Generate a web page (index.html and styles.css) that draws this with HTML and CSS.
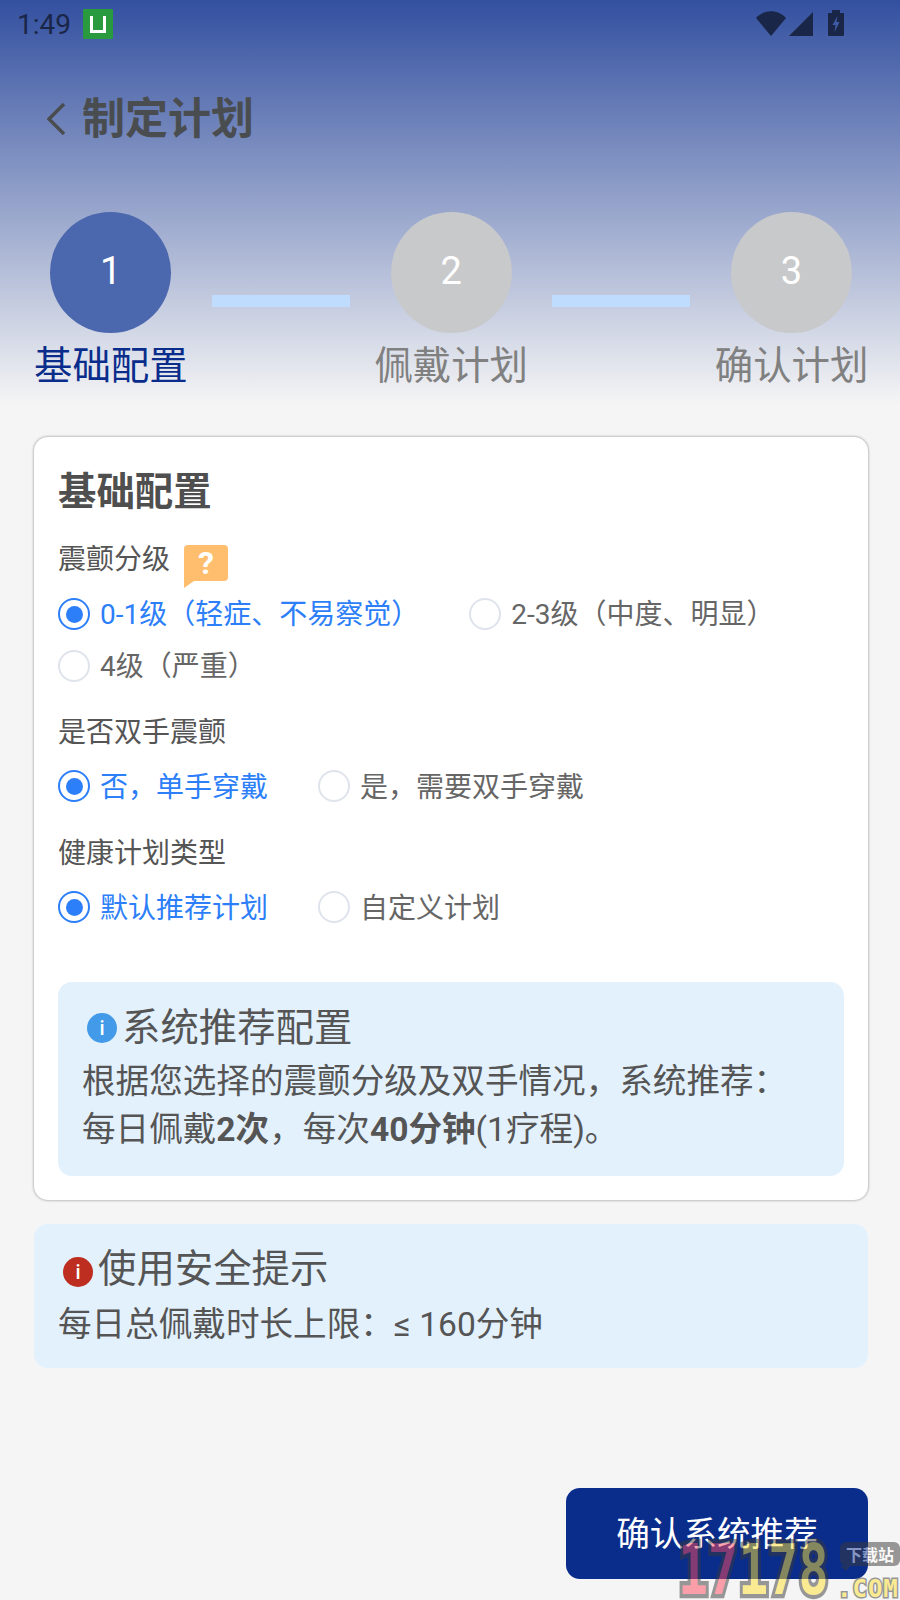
FILE: index.html
```html
<!DOCTYPE HTML>
<html>
<head>
  <meta charset="utf-8">
  <title>制定计划</title>
  <link rel="stylesheet" href="styles.css">
</head>
<body>
<div class="header">
  <div class="status-bar">
    <span class="time">1:49</span>
    <svg class="app-icon" width="30" height="30" viewBox="0 0 30 30">
      <rect width="30" height="30" rx="1" fill="#2a9a3e"/>
      <path d="M8.5 7V22.5H21.5V7" fill="none" stroke="#fff" stroke-width="3"/>
    </svg>
    <div class="status-icons">
      <svg width="30" height="26" viewBox="0 0 30 26"><path d="M0 7C8 -2 22 -2 30 7L15 25Z" fill="#1a2648"/></svg>
      <svg class="signal" width="24" height="24" viewBox="0 0 24 24"><path d="M0 24L24 0V24Z" fill="#1a2648"/></svg>
      <svg class="battery" width="16" height="26" viewBox="0 0 16 26">
        <path fill-rule="evenodd" fill="#1a2648" d="M4 0H12V3H15Q16 3 16 4V25Q16 26 15 26H1Q0 26 0 25V4Q0 3 1 3H4ZM9.5 6L4.5 15H7.5L6.5 22L11.5 12H8.5Z"/>
      </svg>
    </div>
  </div>
  <div class="title-row">
    <svg class="back" width="18" height="32" viewBox="0 0 18 32"><path d="M17 1L2 16L17 31" fill="none" stroke="#4a4d4f" stroke-width="3.5"/></svg>
    <h1>制定计划</h1>
  </div>
  <div class="stepper">
    <div class="step active"><div class="step-num">1</div><div class="step-name">基础配置</div></div>
    <div class="step-bar"></div>
    <div class="step"><div class="step-num">2</div><div class="step-name">佩戴计划</div></div>
    <div class="step-bar"></div>
    <div class="step"><div class="step-num">3</div><div class="step-name">确认计划</div></div>
  </div>
</div>

<div class="content">
  <div class="card">
    <h2>基础配置</h2>
    <div class="label-row">
      <span class="label">震颤分级</span>
      <span class="help">?</span>
    </div>
    <div class="options wrap">
      <div class="option on"><span class="radio"></span>0-1级（轻症、不易察觉）</div>
      <div class="option"><span class="radio"></span>2-3级（中度、明显）</div>
      <div class="option"><span class="radio"></span>4级（严重）</div>
    </div>
    <div class="label section">是否双手震颤</div>
    <div class="options">
      <div class="option on"><span class="radio"></span>否，单手穿戴</div>
      <div class="option"><span class="radio"></span>是，需要双手穿戴</div>
    </div>
    <div class="label section lower">健康计划类型</div>
    <div class="options">
      <div class="option on"><span class="radio"></span>默认推荐计划</div>
      <div class="option"><span class="radio"></span>自定义计划</div>
    </div>
    <div class="notice recommend">
      <div class="notice-title"><span class="dot blue">i</span>系统推荐配置</div>
      <div class="notice-body">根据您选择的震颤分级及双手情况，系统推荐：<br>每日佩戴<b>2次</b>，每次<b>40分钟</b>(1疗程)。</div>
    </div>
  </div>

  <div class="notice safety">
    <div class="notice-title"><span class="dot red">i</span>使用安全提示</div>
    <div class="notice-body">每日总佩戴时长上限：≤ 160分钟</div>
  </div>

  <div class="footer">
    <button class="confirm">确认系统推荐</button>
  </div>
</div>

<div class="watermark">
  <span class="wm-num"><span class="wm-pink">17</span>178</span>
  <span class="wm-tag">下载站</span>
  <span class="wm-com">.COM</span>
</div>
</body>
</html>
```

FILE: styles.css
```css
* {
  box-sizing: border-box;
}

body {
  margin: 0;
  min-height: 1600px;
  position: relative;
  overflow: hidden;
  background: #f5f5f5;
  color: #555;
  font-family: Roboto, "Noto Sans CJK SC", sans-serif;
}

.header {
  height: 405px;
  background: linear-gradient(180deg, #3350a0 0, #f5f5f5 100%);
}

.status-bar {
  height: 48px;
  padding: 9px 0 0 17px;
  display: flex;
  align-items: flex-start;
}

.time {
  font-size: 28px;
  line-height: 32px;
  color: #1a2648;
}

.app-icon {
  margin-left: 12px;
}

.status-icons {
  margin-left: 643px;
  margin-top: 2px;
  display: flex;
  align-items: flex-start;
}

.signal {
  margin-left: 3px;
  margin-top: 1px;
}

.battery {
  margin-left: 15px;
  margin-top: -1px;
}

.title-row {
  margin-top: 37px;
  height: 60px;
  padding-left: 47px;
  display: flex;
  align-items: center;
  gap: 17px;
}

.back {
  margin-top: 8px;
}

h1 {
  margin: 0;
  font-size: 43px;
  font-weight: 700;
  color: #4a4d4f;
}

.stepper {
  margin-top: 67px;
  padding: 0 0 0 34px;
  display: flex;
  align-items: flex-start;
}

.step {
  width: 153.6px;
  flex-shrink: 0;
  display: flex;
  flex-direction: column;
  align-items: center;
}

.step-num {
  width: 121px;
  height: 121px;
  padding-bottom: 3px;
  border-radius: 50%;
  background: #c8c9cb;
  color: #fff;
  font-size: 38px;
  display: flex;
  align-items: center;
  justify-content: center;
}

.step-name {
  margin-top: 9px;
  font-size: 38.4px;
  line-height: 48px;
  color: #808080;
  white-space: nowrap;
}

.active .step-num {
  background: #4b67ad;
}

.active .step-name {
  color: #0a2d8c;
}

.step-bar {
  width: 138px;
  height: 12px;
  flex-shrink: 0;
  margin: 83px 24.4px 0;
  background: #bfdcff;
}

.content {
  padding: 32px 32px 0 34px;
}

.card {
  height: 763px;
  padding: 27px 24px 24px;
  border-radius: 14px;
  background: #fff;
  box-shadow: 0 0 3px rgba(0, 0, 0, .45);
}

h2 {
  margin: 0;
  font-size: 38.4px;
  line-height: 56px;
  font-weight: 700;
  color: #4f4f4f;
}

.label-row {
  margin-top: 20px;
  height: 58px;
  display: flex;
  align-items: flex-start;
}

.label {
  font-size: 28px;
  line-height: 40px;
  color: #555;
}

.section {
  margin-top: 31px;
}

.section.lower {
  margin-top: 32px;
}

.help {
  position: relative;
  width: 44px;
  height: 36px;
  margin: 5px 0 0 14px;
  border-radius: 4px 4px 4px 0;
  background: #ffbe6e;
  color: #fff;
  font-size: 32px;
  font-weight: 700;
  line-height: 36px;
  text-align: center;
}

.help::after {
  content: "";
  position: absolute;
  left: 0;
  top: 36px;
  border-top: 7px solid #ffbe6e;
  border-right: 10px solid transparent;
}

.options {
  margin-top: 17px;
  display: flex;
  gap: 50px;
}

.options.wrap {
  margin-top: 0;
  flex-wrap: wrap;
  gap: 20px 50px;
}

.option {
  height: 32px;
  padding-bottom: 3px;
  display: flex;
  align-items: center;
  font-size: 28px;
  color: #666;
  white-space: nowrap;
}

.radio {
  width: 32px;
  height: 32px;
  margin-top: 3px;
  margin-right: 10px;
  border: 2.5px solid #dfe3ec;
  border-radius: 50%;
  display: flex;
  align-items: center;
  justify-content: center;
}

.wrap .option {
  padding-bottom: 5px;
}

.wrap .radio {
  margin-top: 5px;
}

.option.on {
  color: #2d7ff9;
}

.option.on .radio {
  border-color: #2d7ff9;
}

.option.on .radio::after {
  content: "";
  width: 17px;
  height: 17px;
  border-radius: 50%;
  background: #2d7ff9;
}

.notice {
  border-radius: 14px;
  background: #e3f1fd;
}

.recommend {
  height: 194px;
  margin-top: 59px;
  padding: 22px 24px 0;
}

.safety {
  height: 144px;
  margin-top: 24px;
  padding: 21px 24px 0;
}

.notice-title {
  height: 48px;
  font-size: 38.4px;
  line-height: 48px;
  display: flex;
  align-items: center;
}

.dot {
  width: 30px;
  height: 30px;
  margin: 0 5px;
  border-radius: 50%;
  color: #fff;
  font-size: 20px;
  font-weight: 500;
  line-height: 30px;
  text-align: center;
}

.safety .dot {
  margin-top: 6px;
}

.dot.blue {
  background: #439ae8;
}

.dot.red {
  background: #bd2e20;
}

.notice-body {
  font-size: 33.6px;
  line-height: 48px;
  white-space: nowrap;
}

.recommend .notice-body {
  margin-top: 6px;
}

.safety .notice-body {
  margin-top: 8px;
}

.footer {
  margin-top: 120px;
  display: flex;
  justify-content: flex-end;
}

.confirm {
  width: 302px;
  height: 91px;
  padding: 0 0 4px;
  border: 0;
  border-radius: 14px;
  background: #0a2d8c;
  color: #fff;
  font-family: inherit;
  font-size: 33.6px;
}

.watermark {
  position: absolute;
  left: 678px;
  top: 1540px;
  width: 222px;
  height: 60px;
  opacity: .5;
  pointer-events: none;
}

.wm-num {
  position: absolute;
  left: 0;
  top: 5px;
  height: 37px;
  font-family: "DejaVu Sans Mono", monospace;
  font-size: 50px;
  font-weight: 700;
  line-height: 37px;
  color: #ffe032;
  -webkit-text-stroke: 6px #3a3a3a;
  paint-order: stroke fill;
  transform: scaleY(1.4);
  transform-origin: 0 0;
}

.wm-pink {
  color: #ff4b5f;
}

.wm-tag {
  position: absolute;
  left: 162px;
  top: 2px;
  width: 60px;
  height: 24px;
  border-radius: 6px;
  background: #3a3a3a;
  color: #fff;
  font-family: "Noto Sans CJK SC", sans-serif;
  font-size: 16px;
  font-weight: 700;
  line-height: 24px;
  text-align: center;
}

.wm-tag::after {
  content: "";
  position: absolute;
  left: 0;
  top: 24px;
  border-top: 5px solid #3a3a3a;
  border-left: 6px solid transparent;
  border-right: 4px solid transparent;
}

.wm-com {
  position: absolute;
  left: 159px;
  top: 38px;
  height: 22px;
  font-family: "DejaVu Sans Mono", monospace;
  font-size: 24px;
  font-weight: 700;
  line-height: 22px;
  letter-spacing: 1px;
  color: #ffe032;
  -webkit-text-stroke: 3px #3a3a3a;
  paint-order: stroke fill;
}
```
